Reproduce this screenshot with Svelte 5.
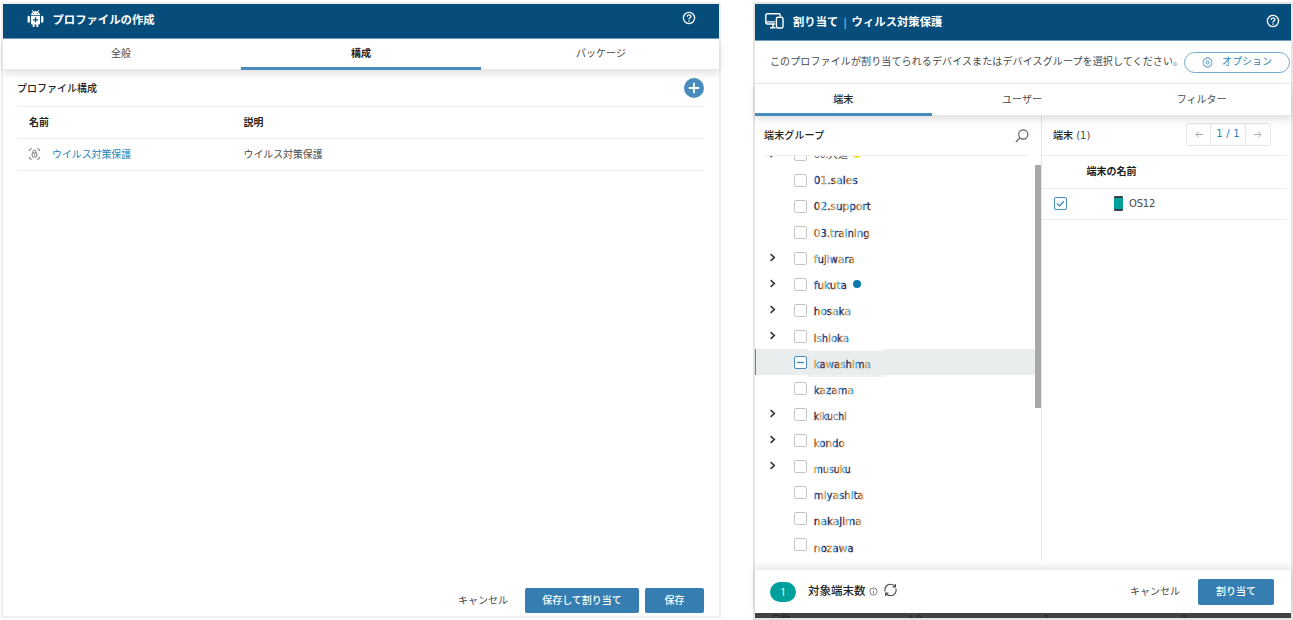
<script>
  const groups = [
    { name: '01.sales', width: 45 },
    { name: '02.support', width: 58 },
    { name: '03.training', width: 57 },
    { name: 'fujiwara', width: 42, open: true },
    { name: 'fukuta', width: 34, open: true, dot: true },
    { name: 'hosaka', width: 38, open: true },
    { name: 'ishioka', width: 36, open: true },
    { name: 'kawashima', width: 58, selected: true },
    { name: 'kazama', width: 41 },
    { name: 'kikuchi', width: 34, open: true },
    { name: 'kondo', width: 32, open: true },
    { name: 'musuku', width: 38, open: true },
    { name: 'miyashita', width: 51 },
    { name: 'nakajima', width: 49 },
    { name: 'nozawa', width: 41 }
  ];
</script>

{#snippet help()}
  <svg class="help" width="14" height="14" viewBox="0 0 14 14" fill="none" stroke="#fff">
    <circle cx="7" cy="7" r="5.6" stroke-width="1.3" />
    <path d="M5.2 5.8C5.2 3.2 8.9 3.3 8.9 5.5C8.9 6.8 7 6.8 7 8.4" stroke-width="1.3" />
    <path d="M7 9.4v1.3" stroke-width="1.4" />
  </svg>
{/snippet}

{#snippet chevron()}
  <svg width="7" height="9" viewBox="0 0 7 9" fill="none" stroke="#333" stroke-width="1.6"><path d="M1.6 1.2L5.3 4.5L1.6 7.8" /></svg>
{/snippet}

<main>
  <section class="panel profile">
    <header>
      <svg class="robot" width="17" height="18" viewBox="0 0 17 18" fill="#fff">
        <path d="M4 5.2C4 3.5 5 2.4 6 1.9L4.8.4l.6-.3L6.8 1.6Q8.5 1 10.2 1.6L11.6.1l.6.3L11 1.9c1 .5 2 1.6 2 3.3z" />
        <path d="M4 6h9v7.5a1 1 0 0 1-1 1h-.7V17H9.4v-2.5H7.6V17H5.7v-2.5H5a1 1 0 0 1-1-1z" />
        <rect x=".6" y="5.8" width="2.3" height="7" rx="1.1" />
        <rect x="14.1" y="5.8" width="2.3" height="7" rx="1.1" />
        <path d="M8.5 7.3v5M6 9.8h5" stroke="#064d7c" stroke-width="1.3" />
        <circle cx="6.7" cy="3.5" r=".5" fill="#064d7c" /><circle cx="10.3" cy="3.5" r=".5" fill="#064d7c" />
      </svg>
      <h1>プロファイルの作成</h1>
      {@render help()}
    </header>
    <nav>
      <span>全般</span><span class="active">構成</span><span>パッケージ</span>
    </nav>
    <div class="content">
      <div class="subhead">
        <span>プロファイル構成</span>
        <svg width="20" height="20" viewBox="0 0 20 20"><circle cx="10" cy="10" r="10" fill="#478cbd" /><path d="M10 4.8v10.4M4.8 10h10.4" stroke="#fff" stroke-width="1.8" /></svg>
      </div>
      <div class="row th"><span>名前</span><span>説明</span></div>
      <div class="row">
        <span class="link">
          <svg width="11" height="12" viewBox="0 0 11 12" fill="none" stroke="#666" stroke-width=".9">
            <path d="M2.8.8H1.8Q.6.8.6 2v1M.6 9v1q0 1.2 1.2 1.2h1M8.2.8h1q1.2 0 1.2 1.2v1M10.4 9v1q0 1.2-1.2 1.2h-1" />
            <path d="M3.2 5.6Q3.2 5 3.8 5h3.4q.6 0 .6.6v2.6q0 .8-.8.8H4q-.8 0-.8-.8zM4 5V3.7a1.5 1.5 0 0 1 3 0V5M5.5 6.3v1.4" />
          </svg>
          ウイルス対策保護
        </span>
        <span>ウイルス対策保護</span>
      </div>
    </div>
    <footer>
      <span class="cancel">キャンセル</span>
      <button class="wide">保存して割り当て</button>
      <button class="small">保存</button>
    </footer>
  </section>

  <section class="panel assign">
    <header>
      <svg class="devices" width="19" height="16" viewBox="0 0 19 16" fill="none" stroke="#fff" stroke-width="1.4">
        <path d="M15.3 3.6V2.2Q15.3.8 13.9.8H2.2Q.8.8.8 2.2V9.6Q.8 11 2.2 11H10M.8 8.9H10M5 14.8h5.5M8 11v3.6" />
        <rect x="11.4" y="4.3" width="6.6" height="10.7" rx="1.6" />
      </svg>
      <h1>割り当て<i>|</i>ウィルス対策保護</h1>
      {@render help()}
    </header>
    <div class="intro">
      <span>このプロファイルが割り当てられるデバイスまたはデバイスグループを選択してください。</span>
      <div class="option">
        <svg width="11" height="11" viewBox="0 0 11 11" fill="none" stroke="#478cbd">
          <path d="M4.2.8h2.6l.5 1.3 1.4-.1 1.3 2.2-.8 1.3.8 1.3-1.3 2.2-1.4-.1-.5 1.3H4.2l-.5-1.3-1.4.1L1 6.8l.8-1.3L1 4.2 2.3 2l1.4.1z" stroke-width=".9" />
          <circle cx="5.5" cy="5.5" r="1.5" />
        </svg><span>オプション</span>
      </div>
    </div>
    <nav>
      <span class="active">端末</span><span>ユーザー</span><span>フィルター</span>
    </nav>
    <div class="columns">
      <div class="groups">
        <div class="grouphead">
          <span>端末グループ</span>
          <svg width="15" height="15" viewBox="0 0 15 15" fill="none" stroke="#555" stroke-width="1.1"><circle cx="9.3" cy="6.5" r="4.6" /><path d="M6 9.8L1.8 14" /></svg>
        </div>
        <div class="tree">
          <div class="item first">
            <span class="toggle">{@render chevron()}</span><span class="box"></span>
            <span class="cut">00.大道</span><b class="yellow"></b>
          </div>
          {#each groups as g, i}
            <div class="item" class:selected={g.selected}>
              <span class="toggle">{#if g.open}{@render chevron()}{/if}</span>
              <span class="box">{#if g.selected}<svg width="11" height="11"><path d="M2 5.5h7" stroke="#478cbd" stroke-width="1.4" /></svg>{/if}</span>
              <svg class="name" width={g.width} height="16" style:margin-top="{Math.round(i * 0.26) * 2}px">
                <defs>
                  <linearGradient id="fringe{i}" gradientUnits="userSpaceOnUse" x1={-(i % 4) * 3} y1="0" x2={13 - (i % 4) * 3} y2="0" spreadMethod="repeat">
                    <stop offset="0" stop-color="#48b0fb" /><stop offset=".2" stop-color="#1d68ad" />
                    <stop offset=".35" stop-color="#1f1b50" /><stop offset=".5" stop-color="#3b3040" />
                    <stop offset=".65" stop-color="#b05c10" /><stop offset=".83" stop-color="#e8a04c" />
                    <stop offset="1" stop-color="#48b0fb" />
                  </linearGradient>
                </defs>
                <text x="0.8" y="11.5" textLength={g.width - 1} lengthAdjust="spacingAndGlyphs" fill="url(#fringe{i})" stroke="url(#fringe{i})" stroke-width=".3">{g.name}</text>
              </svg>
              {#if g.dot}<b class="blue"></b>{/if}
            </div>
          {/each}
        </div>
      </div>
      <div class="scroll"><div></div></div>
      <div class="devlist">
        <div class="devhead">
          <span><strong>端末</strong> (1)</span>
          <div class="pager"><span>
            <svg width="8" height="7" fill="none" stroke="#aaa"><path d="M8 3.5H1M3.8.7L1 3.5l2.8 2.8" /></svg>
          </span><span class="page">1 / 1</span><span>
            <svg width="8" height="7" fill="none" stroke="#aaa"><path d="M0 3.5h7M4.2.7L7 3.5 4.2 6.3" /></svg>
          </span></div>
        </div>
        <div class="devth">端末の名前</div>
        <div class="device">
          <span class="box checked"><svg width="11" height="11" fill="none" stroke="#478cbd" stroke-width="1.4"><path d="M2 5.4l2.5 2.5L9 3.2" /></svg></span>
          <i class="phone"></i><span class="os">OS12</span>
        </div>
      </div>
    </div>
    <footer>
      <span class="count">1</span>
      <strong class="target">対象端末数</strong>
      <svg class="info" width="9" height="9" fill="none" stroke="#777" stroke-width=".9"><circle cx="4.5" cy="4.5" r="3.6" /><path d="M4.5 4v2.7M4.5 2.3v.9" /></svg>
      <svg class="refresh" width="13" height="14" viewBox="0 0 13 14" fill="none" stroke="#444" stroke-width="1.1">
        <path d="M1.1 8.5C.2 4.5 2.6 1.2 6.5 1.2c2 0 3.6.8 4.6 2.4M11.4 1v3H8.5M11.9 5.5c.9 4-1.5 7.3-5.4 7.3-2 0-3.6-.8-4.6-2.4M1.6 13v-3h2.9" />
      </svg>
      <span class="cancel">キャンセル</span>
      <button>割り当て</button>
    </footer>
    <div class="under"><span>自動</span><span>1.0</span><span>2</span><span>0</span></div>
  </section>
</main>

<style>
  :global(body) { background: #fff; overflow: hidden; }
  main {
    box-sizing: border-box; width: 1293px; height: 620px; display: flex; align-items: flex-start;
    padding: 2px 0 0 1px; font: 10px/16px "Open Sans", "Noto Sans CJK JP", sans-serif; color: #4a4a4a;
  }
  .panel { box-sizing: border-box; display: flex; flex-direction: column; border: 2px solid #f0f0f0; flex: none; }
  .profile { width: 720px; height: 616px; }
  .assign { width: 540px; height: 618px; margin-left: 32px; border-color: #e4e4e4; }
  svg { flex: none; display: block; }
  header { box-sizing: border-box; display: flex; align-items: center; background: #064d7c; color: #fff; border-bottom: 1px solid #6fa0c0; }
  .profile header { height: 35px; padding: 0 23px 4px 24px; }
  .assign header { height: 37px; padding: 0 11px 3px 10px; }
  h1 { margin: 0; font-size: 11.35px; line-height: 18px; font-weight: 700; }
  .profile h1 { margin-left: 8.5px; padding-top: 2px; }
  .assign h1 { margin-left: 9px; padding-top: 2px; }
  h1 i { font-style: normal; font-weight: 400; padding: 0 3.5px; opacity: .7; }
  .help { margin-left: auto; }
  .profile .help { margin-top: -2px; }
  nav { display: grid; grid-template-columns: 1fr 1fr 1fr; background: #fff; box-shadow: 0 3px 8px #0002; border-bottom: 1px solid #e8e8e8; box-sizing: border-box; position: relative; z-index: 1; }
  nav span { text-align: center; box-sizing: border-box; }
  nav .active { border-bottom: 3px solid #478cbd; color: #222; font-weight: 500; }
  .profile nav { height: 31px; grid-template-columns: 238px 240px 238px; }
  .profile nav span { padding-top: 6px; }
  .profile nav span:first-child { padding-right: 2px; }
  .profile nav span:last-child { padding-left: 2px; }
  .profile nav .active { margin-bottom: -1px; font-weight: 700; }
  .content { padding: 0 15px; flex: 1; }
  .subhead { height: 37px; box-sizing: border-box; display: flex; justify-content: space-between; align-items: center; border-bottom: 1px solid #eee; color: #222; font-weight: 500; }
  .subhead span { margin-left: -1px; }
  .row { display: grid; grid-template-columns: 225.5px 1fr; height: 32px; box-sizing: border-box; border-bottom: 1px solid #ececec; align-items: center; padding-bottom: 2px; font-size: 9.9px; }
  .row > span:first-child { padding-left: 11px; }
  .th { font-weight: 700; color: #222; }
  .link { display: flex; align-items: center; gap: 12px; color: #2385bb; }
  .profile footer { display: flex; justify-content: flex-end; align-items: center; padding: 0 15px 3px 0; }
  button { height: 26px; border: 0; border-radius: 2px; background: #367db2; color: #fff; font: 500 10px/16px "Open Sans", "Noto Sans CJK JP", sans-serif; padding: 0 0 2px; }
  .profile button { height: 25px; margin-top: 1px; padding-bottom: 1px; }
  .profile .wide { width: 114px; margin: 1px 6px 0 17px; }
  .small { width: 59px; }
  .intro { height: 42px; display: flex; align-items: center; justify-content: space-between; padding: 0 1px 0 15px; border-bottom: 1px solid #ececec; white-space: nowrap; }
  .intro > span { letter-spacing: .12px; padding-bottom: 3px; }
  .option { width: 106px; height: 21px; box-sizing: border-box; border: 1px solid #73a9ce; border-radius: 11px; display: flex; gap: 9px; align-items: center; justify-content: center; color: #3583b8; }
  .option span { padding-bottom: 2px; }
  .assign nav { height: 32px; }
  .assign nav span { padding-top: 7px; }
  .assign nav span:nth-child(2) { padding-right: 2px; }
  .assign nav .active { margin-bottom: -1px; margin-right: 2px; }
  .columns { display: flex; height: 454px; }
  .groups { width: 280px; }
  .grouphead { height: 40px; box-sizing: border-box; margin: 0 6px 0 9px; display: flex; justify-content: space-between; align-items: center; color: #222; font-weight: 500; border-bottom: 1px solid #eee; }
  .grouphead span { letter-spacing: .15px; padding-bottom: 1px; }
  .tree { height: 405px; overflow: hidden; }
  .item { display: flex; align-items: center; height: 26px; box-sizing: border-box; padding-left: 14px; }
  .item.first { margin-top: -15px; }
  .item.selected { background: #e9edee; border-left: 1px solid #18a4a1; padding-left: 13px; position: relative; }
  .selected::before, .selected::after { content: ''; position: absolute; left: 52px; width: 76px; height: 2px; }
  .selected::before { top: 0; background: #f9fafa; }
  .selected::after { top: 26px; background: #eff1f2; }
  .toggle { width: 25px; margin-top: -1px; }
  .box { box-sizing: border-box; width: 13px; height: 13px; border: 1px solid #c4c4c4; border-radius: 2px; background: #fff; flex: none; }
  .selected .box, .checked { border-color: #478cbd; }
  .cut { margin-left: 7px; }
  .item b { width: 8px; height: 8px; border-radius: 50%; margin-left: 5px; }
  .yellow { background: #f5e12e; }
  .item .blue { background: #087ab0; margin-left: 6px; }
  .name { margin-left: 6px; overflow: visible; font: 10px "DejaVu Sans", sans-serif; }
  .scroll { width: 6px; height: 445px; border-right: 1px solid #e4e6e7; }
  .scroll div { height: 243px; margin-top: 49px; background: #a8a8a8; }
  .devlist { flex: 1; }
  .devhead { height: 40px; box-sizing: border-box; display: flex; align-items: center; justify-content: space-between; padding: 0 15px 0 11px; margin-right: 5px; border-bottom: 1px solid #ececec; font-family: "DejaVu Sans", "Noto Sans CJK JP", sans-serif; }
  .devhead strong { font-weight: 500; color: #222; }
  .pager { height: 23px; box-sizing: border-box; display: grid; grid-template-columns: 23px 36px 24px; border: 1px solid #e5e5e5; border-radius: 3px; margin-top: -3px; }
  .pager span { display: flex; align-items: center; justify-content: center; }
  .pager .page { border: solid #e5e5e5; border-width: 0 1px; color: #2385bb; letter-spacing: .2px; }
  .devth { height: 33px; box-sizing: border-box; padding: 7px 0 0 44.5px; margin-right: 5px; border-bottom: 1px solid #ececec; color: #222; font-weight: 700; }
  .device { height: 31px; box-sizing: border-box; display: flex; align-items: center; padding: 0 0 1px 12px; margin-right: 5px; border-bottom: 1px solid #ececec; }
  .os { font: 10px/16px "DejaVu Sans", sans-serif; letter-spacing: -.2px; }
  .phone { box-sizing: border-box; width: 9px; height: 15px; background: #00a09a; border: solid #344448; border-width: 2px 0; border-radius: 1px; margin: 0 6px 0 47px; }
  .assign footer { height: 43px; display: flex; align-items: center; padding: 0 17px 0 15px; box-sizing: border-box; background: #fff; box-shadow: 0 -2px 8px #0002; position: relative; }
  .count { width: 26px; height: 20px; line-height: 20px; border-radius: 10px; text-align: center; color: #fff; background: #00a09a; }
  .target { font-size: 11.5px; font-weight: 500; color: #222; margin: 0 3px 2px 12px; }
  .refresh { margin-left: 6px; margin-top: -3px; }
  .assign .cancel { margin-left: auto; padding-bottom: 2px; }
  .assign button { width: 76px; margin-left: 18px; }
  .under { flex: 1; min-height: 0; overflow: hidden; background: #444; color: #242424; display: grid; grid-template-columns: 137px 135px 138px 1fr; padding-left: 16px; line-height: 12px; }
</style>
